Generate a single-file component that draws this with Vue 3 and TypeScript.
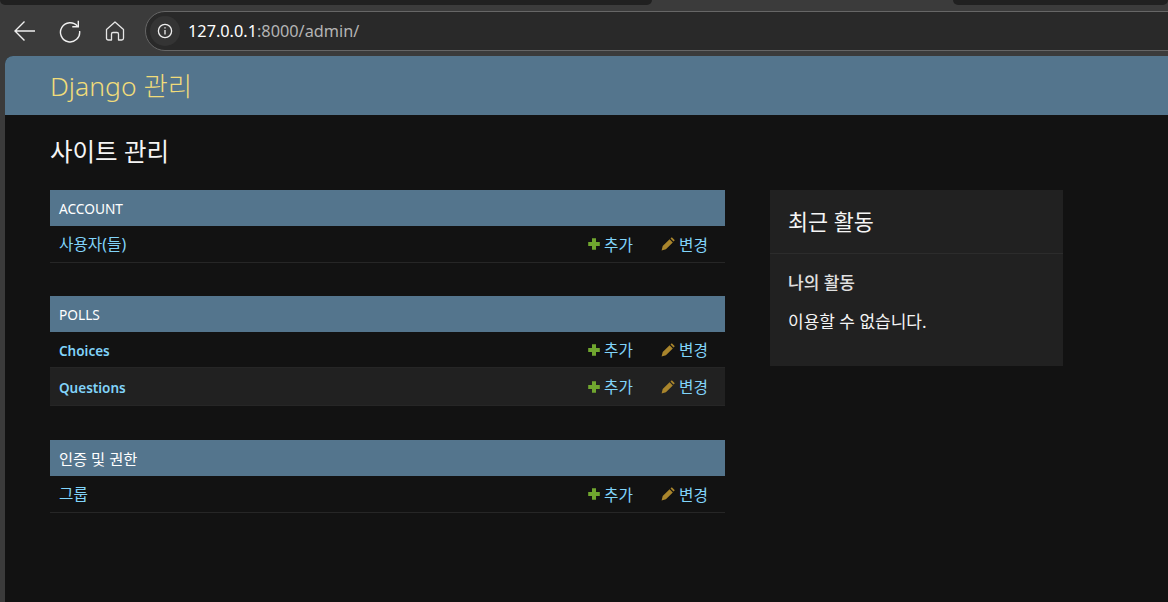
<script setup lang="ts">
interface Row { name: string; bold?: boolean; alt?: boolean; tight?: boolean }
interface Group { title: string; ko?: boolean; rows: Row[] }
const groups: Group[] = [
  { title: 'ACCOUNT', rows: [{ name: '사용자(들)' }] },
  { title: 'POLLS', rows: [{ name: 'Choices', bold: true, tight: true }, { name: 'Questions', bold: true, alt: true }] },
  { title: '인증 및 권한', ko: true, rows: [{ name: '그룹' }] },
]
</script>

<template>
  <div class="window">
    <div class="tabstrip">
      <div class="tab tab-left"></div>
      <div class="tab tab-right"></div>
    </div>
    <div class="toolbar">
      <svg class="tb-icon back" width="24" height="24" viewBox="0 0 24 24" fill="none" stroke="#f0f0f0" stroke-width="1.4">
        <path d="M22 12H2.500M11.500 2.500 2 12l9.500 9.500" />
      </svg>
      <svg class="tb-icon reload" width="24" height="24" viewBox="0 0 24 24" fill="none" stroke="#f0f0f0" stroke-width="1.400">
        <path d="M19.500 7.200A9.600 9.600 0 1 0 21.600 12" />
        <path d="M20.300 1.800v6h-6" />
      </svg>
      <svg class="tb-icon home" width="22" height="22" viewBox="0 0 22 22" fill="none" stroke="#e6e6e6" stroke-width="1.300" stroke-linejoin="round">
        <path d="M2.500 9.500 11 2l8.500 7.500v8.700a1.800 1.800 0 0 1-1.800 1.800H14.500v-6a1.500 1.500 0 0 0-1.500-1.500H9a1.500 1.500 0 0 0-1.500 1.500v6H4.300a1.800 1.800 0 0 1-1.800-1.800z" />
      </svg>
      <div class="omnibox">
        <div class="info">
          <svg width="16" height="16" viewBox="0 0 16 16" fill="none" stroke="#eeeeee" stroke-width="1.300">
            <circle cx="8" cy="8" r="6.600" />
            <path d="M8 7v4.500M8 4.300v1.300" />
          </svg>
        </div>
        <span class="url"><span class="host">127.0.0.1</span><span class="rest">:8000/admin/</span></span>
      </div>
    </div>
    <div class="page">
      <header class="site-header"><span class="brand">Django 관리</span></header>
      <main class="content">
        <h1 class="title">사이트 관리</h1>
        <div class="columns">
          <div class="app-list">
            <section v-for="g in groups" :key="g.title" class="module">
              <div class="caption" :class="{ ko: g.ko }"><span>{{ g.title }}</span></div>
              <div v-for="r in g.rows" :key="r.name" class="row" :class="{ alt: r.alt, tight: r.tight }">
                <span class="name" :class="{ bold: r.bold }">{{ r.name }}</span>
                <span class="action add">
                  <svg class="ico" width="12" height="12" viewBox="0 0 12 12"><path fill="#70a62f" d="M4 .2h4v3.800h3.800v4H8v3.800H4V8H.2V4H4z" /></svg>
                  추가
                </span>
                <span class="action change">
                  <svg class="ico" width="14" height="14" viewBox="0 0 14 14"><path fill="#a9852c" d="M10.800.2 13.800 3.200 12.500 4.500 9.500 1.500zM8.600 2.200 11.800 5.400 4.900 12.300.6 13.400 1.700 9.100z" /></svg>
                  변경
                </span>
              </div>
            </section>
          </div>
          <aside class="recent">
            <h2 class="recent-title">최근 활동</h2>
            <div class="recent-body">
              <h3 class="mine">나의 활동</h3>
              <p class="none">이용할 수 없습니다.</p>
            </div>
          </aside>
        </div>
      </main>
    </div>
  </div>
</template>

<style>
html, body { margin: 0; background: #121212; overflow: hidden; }
</style>

<style scoped>
.window {
  width: 1168px;
  height: 602px;
  display: flex;
  flex-direction: column;
  background: #3b3b3b;
  overflow: hidden;
  font-family: "Noto Sans", "Noto Sans CJK KR", sans-serif;
}
.tabstrip { height: 6px; display: flex; justify-content: space-between; flex: none; }
.tab { height: 5px; background: #202020; border-radius: 0 0 6px 6px; }
.tab-left { width: 652px; }
.tab-right { width: 215px; }
.toolbar { height: 50px; flex: none; display: flex; align-items: center; padding-left: 13px; box-sizing: border-box; }
.tb-icon { flex: none; }
.reload { margin-left: 21px; }
.home { margin-left: 22px; }
.omnibox {
  margin-left: 19px;
  flex: 1;
  height: 40px;
  margin-right: -30px;
  box-sizing: border-box;
  background: #292929;
  border: 1px solid #666;
  border-radius: 20px 0 0 20px;
  display: flex;
  align-items: center;
  padding-left: 4px;
}
.info {
  width: 30px;
  height: 30px;
  border-radius: 50%;
  background: #343434;
  display: flex;
  align-items: center;
  justify-content: center;
}
.url { margin-left: 8px; font-size: 16.300px; font-family: "Noto Sans", sans-serif; }
.host { color: #fff; }
.rest { color: #b4b4b4; }
.page {
  flex: 1;
  margin-left: 5px;
  background: #121212;
  border-radius: 8px 0 0 0;
  overflow: hidden;
  display: flex;
  flex-direction: column;
}
.site-header {
  height: 59px;
  box-sizing: border-box;
  padding-bottom: 2px;
  flex: none;
  background: #54758d;
  display: flex;
  align-items: center;
  padding-left: 45px;
}
.brand { color: #f0dc7a; font-size: 26.500px; font-weight: 300; }
.content { padding: 20px 0 0 45px; }
.title { margin: 0 0 22px; font-size: 24.500px; font-weight: 400; line-height: 33px; color: #f5f5f5; }
.columns { display: flex; align-items: flex-start; gap: 45px; }
.app-list { width: 675px; flex: none; }
.module { margin-bottom: 33px; }
.module:nth-child(2) { margin-bottom: 34px; }
.caption {
  height: 36px;
  display: flex;
  align-items: center;
  padding-left: 9px;
  background: #54758d;
  color: #fff;
  font-size: 13.700px;
}
.caption.ko { font-size: 15.300px; }
.row {
  height: 37px;
  box-sizing: border-box;
  display: flex;
  align-items: center;
  padding-left: 9px;
  border-bottom: 1px solid #262626;
  font-size: 15.700px;
}
.row.tight { height: 36px; }
.row.alt { background: #212121; height: 38px; }
.name { flex: 1; color: #81d4fa; padding-bottom: 2px; }
.name.bold { font-weight: 600; font-size: 13.500px; padding: 2px 0 0; }
.action { display: inline-flex; align-items: center; gap: 4px; color: #81d4fa; }
.ico { flex: none; }
.add { width: 73px; }
.change { width: 64px; }
.recent { width: 293px; flex: none; background: #212121; height: 176px; }
.recent-title {
  margin: 0;
  height: 64px;
  box-sizing: border-box;
  padding: 0 0 2px 18px;
  display: flex;
  align-items: center;
  font-size: 21.800px;
  font-weight: 400;
  color: #f5f5f5;
  border-bottom: 1px solid #2c2c2c;
}
.recent-body { padding: 19px 18px 0; }
.mine { margin: 0; font-size: 17px; line-height: 20px; font-weight: 500; color: #e0e0e0; }
.none { margin: 19px 0 0; font-size: 17px; line-height: 20px; color: #f5f5f5; }
</style>
